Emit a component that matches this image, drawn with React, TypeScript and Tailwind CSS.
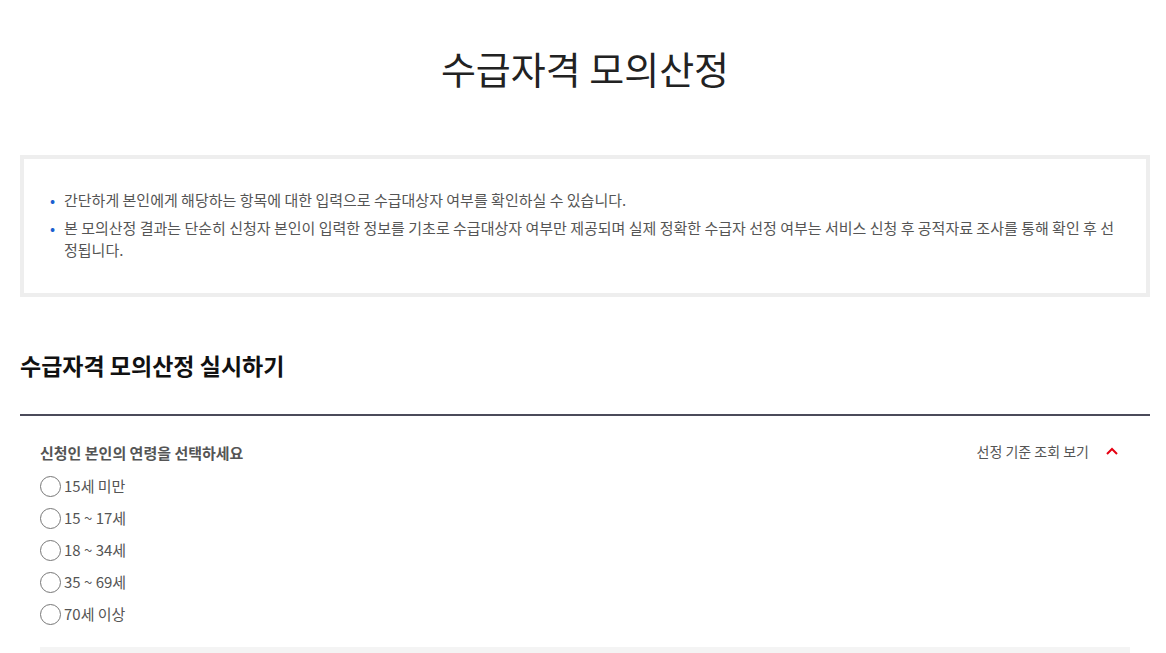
import React from "react";

const ages = ["15세 미만", "15 ~ 17세", "18 ~ 34세", "35 ~ 69세", "70세 이상"];

export default function App() {
  return (
    <div
      className="w-[1166px] min-h-[653px] bg-white overflow-hidden"
      style={{ fontFamily: '"Noto Sans CJK KR", "Noto Sans", sans-serif' }}
    >
      <div className="px-[20px] pr-[16px]">
        <h1 className="pt-[40px] text-center text-[38px] leading-[56px] font-normal text-[#222]">
          수급자격 모의산정
        </h1>
        <div className="mt-[59px] border-[4px] border-[#eeeeee] px-[26px] pt-[30px] pb-[32px]">
          <ul className="text-[15px] leading-[22px] text-[#555]">
            <li className="flex">
              <span className="w-[14px] shrink-0 text-[#1a5fd0]">•</span>
              <span>간단하게 본인에게 해당하는 항목에 대한 입력으로 수급대상자 여부를 확인하실 수 있습니다.</span>
            </li>
            <li className="flex mt-[6px]">
              <span className="w-[14px] shrink-0 text-[#1a5fd0]">•</span>
              <span className="pr-[4px] break-all">
                본 모의산정 결과는 단순히 신청자 본인이 입력한 정보를 기초로 수급대상자 여부만 제공되며 실제 정확한 수급자 선정 여부는 서비스 신청 후 공적자료 조사를 통해 확인 후 선정됩니다.
              </span>
            </li>
          </ul>
        </div>
        <h2 className="mt-[48px] text-[23px] leading-[40px] font-bold text-[#111]">
          수급자격 모의산정 실시하기
        </h2>
        <div className="mt-[29px] border-t-2 border-[#4b4b5a]">
          <div className="px-[20px] pt-[21px]">
            <div className="flex items-center justify-between">
              <div className="text-[15px] font-semibold text-[#555] leading-[24px] pt-[4px]">
                신청인 본인의 연령을 선택하세요
              </div>
              <div className="flex items-center gap-[16px] pr-[11px] text-[14px] text-[#555]">
                <span>선정 기준 조회 보기</span>
                <svg width="14" height="10" viewBox="0 0 14 10" fill="none">
                  <path d="M2 8 L7 3 L12 8" stroke="#e60012" strokeWidth="2" />
                </svg>
              </div>
            </div>
            <div className="mt-[5px] flex flex-col">
              {ages.map((a) => (
                <label key={a} className="flex items-center h-[32px] text-[15px] text-[#555]">
                  <span className="w-[21px] h-[21px] rounded-full border border-[#777] bg-white mr-[3px]" />
                  <span>{a}</span>
                </label>
              ))}
            </div>
            <div className="mt-[17px] h-[20px] bg-[#f4f4f4]" />
          </div>
        </div>
      </div>
    </div>
  );
}
